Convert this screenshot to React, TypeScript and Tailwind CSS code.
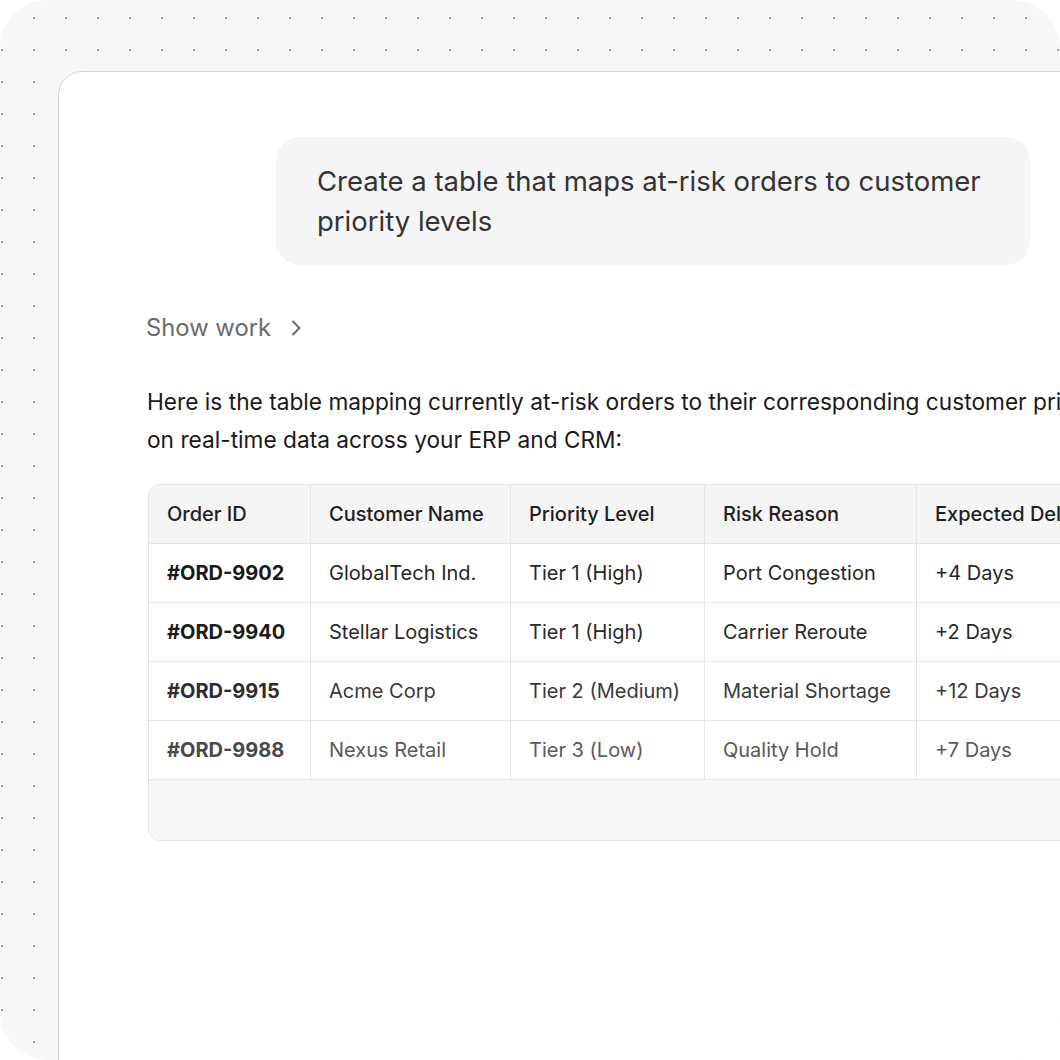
import React from "react";

const rows = [
  { id: "#ORD-9902", name: "GlobalTech Ind.", tier: "Tier 1 (High)", reason: "Port Congestion", delay: "+4 Days", c: "text-[#262626]", b: "text-[#1a1a1a]" },
  { id: "#ORD-9940", name: "Stellar Logistics", tier: "Tier 1 (High)", reason: "Carrier Reroute", delay: "+2 Days", c: "text-[#2a2a2a]", b: "text-[#1c1c1c]" },
  { id: "#ORD-9915", name: "Acme Corp", tier: "Tier 2 (Medium)", reason: "Material Shortage", delay: "+12 Days", c: "text-[#3a3a3a]", b: "text-[#2e2e2e]" },
  { id: "#ORD-9988", name: "Nexus Retail", tier: "Tier 3 (Low)", reason: "Quality Hold", delay: "+7 Days", c: "text-[#5a5a5a]", b: "text-[#4a4a4a]" },
];

const cols = ["w-[162px]", "w-[200px]", "w-[194px]", "w-[212px]", "w-[330px]"];

export default function App() {
  return (
    <div className="w-[1060px] h-[1060px] overflow-hidden rounded-[48px] bg-[#f7f7f7] bg-[radial-gradient(circle,#a6a6a6_1.1px,transparent_1.5px)] bg-[size:32px_32px] bg-[position:-14px_2px] pl-[58px] pt-[71px] font-['Inter',sans-serif]">
      <div className="w-[1100px] h-[1100px] bg-white border border-[#d4d4d4] rounded-tl-[24px] pl-[88px] pt-[65px]">
        <div className="ml-[129px] w-[754px] h-[128px] rounded-[24px] bg-[#f5f5f5] pl-[41px] pt-[24px] text-[27.5px] leading-[40px] text-[#333333]">
          <div className="whitespace-nowrap">Create a table that maps at-risk orders to customer</div>
          <div className="whitespace-nowrap">priority levels</div>
        </div>

        <div className="mt-[48px] flex items-center h-[30px] text-[23.8px] text-[#6b6b6b] -ml-[1px]">
          <span>Show work</span>
          <svg className="ml-[20px]" width="10" height="16" viewBox="0 0 10 16" fill="none">
            <path d="M2 1.5l6.5 6.5L2 14.5" stroke="#6b6b6b" strokeWidth="2" strokeLinecap="round" strokeLinejoin="round" />
          </svg>
        </div>

        <div className="mt-[40px] text-[22.7px] leading-[38px] text-[#1a1a1a]">
          <div className="whitespace-nowrap">Here is the table mapping currently at-risk orders to their corresponding customer priority levels, based</div>
          <div className="whitespace-nowrap">on real-time data across your ERP and CRM:</div>
        </div>

        <div className="mt-[25px] ml-[1px] w-[1100px] rounded-[12px] border border-[#e6e6e6] overflow-hidden bg-[#f7f7f7]">
          <div className="flex h-[59px] bg-[#f5f5f5] border-b border-[#e6e6e6] text-[20px] font-medium text-[#1f1f1f]">
            {["Order ID", "Customer Name", "Priority Level", "Risk Reason", "Expected Delay"].map((h, i) => (
              <div key={h} className={`${cols[i]} shrink-0 flex items-center px-[18px] border-r border-[#e6e6e6] whitespace-nowrap`}>
                {h}
              </div>
            ))}
          </div>
          {rows.map((r) => (
            <div key={r.id} className={`flex h-[59px] bg-white border-b border-[#e6e6e6] text-[20px] ${r.c}`}>
              <div className={`${cols[0]} shrink-0 flex items-center px-[18px] border-r border-[#e6e6e6] font-bold ${r.b}`}>{r.id}</div>
              <div className={`${cols[1]} shrink-0 flex items-center px-[18px] border-r border-[#e6e6e6] whitespace-nowrap`}>{r.name}</div>
              <div className={`${cols[2]} shrink-0 flex items-center px-[18px] border-r border-[#e6e6e6] whitespace-nowrap`}>{r.tier}</div>
              <div className={`${cols[3]} shrink-0 flex items-center px-[18px] border-r border-[#e6e6e6] whitespace-nowrap`}>{r.reason}</div>
              <div className={`${cols[4]} shrink-0 flex items-center px-[18px] border-r border-[#e6e6e6] whitespace-nowrap`}>{r.delay}</div>
            </div>
          ))}
          <div className="h-[60px] bg-[#f7f7f7]" />
        </div>
      </div>
    </div>
  );
}
